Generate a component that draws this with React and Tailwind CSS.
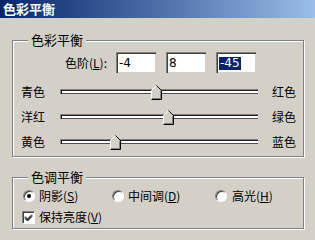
import React from 'react';

const Thumb = ({ x }) => (
  <svg
    width="11"
    height="15"
    viewBox="0 0 11 15"
    className="absolute top-[-5px]"
    style={{ left: x - 5 }}
  >
    <polygon points="5.5,0.5 10.5,5.5 10.5,14.5 0.5,14.5 0.5,5.5" fill="#d4d0c8" />
    <polyline points="0.5,14 0.5,5.5 5.5,0.5" fill="none" stroke="#ffffff" />
    <polyline points="5.5,0.5 10.5,5.5 10.5,14.5 0.5,14.5" fill="none" stroke="#000000" />
    <polyline points="9.5,6 9.5,13.5 1,13.5" fill="none" stroke="#808080" />
  </svg>
);

const Slider = ({ left, right, value }) => {
  // range -100..100 mapped onto a 198px track
  const x = Math.round(((value + 100) / 200) * 198);
  return (
    <div className="flex items-center h-[25px]">
      <span className="w-[47px] pl-[8px] leading-none">{left}</span>
      <div className="relative w-[198px] h-[5px] bg-white border-t border-l border-[#808080] border-b-white border-r-white shadow-[inset_1px_1px_0_#202020,inset_0_-1px_0_#505050]">
        <Thumb x={x} />
      </div>
      <span className="ml-[14px] leading-none">{right}</span>
    </div>
  );
};

const Field = ({ value, selected }) => (
  <div className="w-[40px] h-[21px] bg-white border-t border-l border-[#808080] border-b-white border-r-white shadow-[inset_1px_1px_0_#404040,inset_-1px_-1px_0_#d4d0c8] flex items-center pl-[2px] font-['DejaVu_Sans',sans-serif] text-[12px]">
    {selected ? (
      <span className="bg-[#0a246a] text-white leading-[13px] px-[1px]">{value}</span>
    ) : (
      <span className="leading-[13px]">{value}</span>
    )}
  </div>
);

const Radio = ({ checked }) => (
  <span className="relative w-[12px] h-[12px] rounded-full bg-white border border-[#808080] border-b-white border-r-white shadow-[inset_1px_1px_0_#404040] shrink-0">
    {checked && <span className="absolute left-[3px] top-[3px] w-[4px] h-[4px] rounded-full bg-black" />}
  </span>
);

const Group = ({ title, className, children }) => (
  <div className={`relative mx-[12px] w-[292px] border border-[#808080] shadow-[inset_1px_1px_0_#fff,1px_1px_0_#fff] ${className}`}>
    <span className="absolute left-[15px] top-[-9px] px-[3px] bg-[#d4d0c8] leading-[16px] text-[13px]">{title}</span>
    {children}
  </div>
);

export default function App() {
  return (
    <div className="w-[315px] h-[240px] overflow-hidden bg-[#d4d0c8] text-black text-[12px] font-['Noto_Sans_CJK_SC','Noto_Sans',sans-serif]">
      <div className="h-[18px] bg-gradient-to-r from-[#0a246a] to-[#9bbde8] text-white font-bold text-[13px] leading-[18px] pl-[3px]">
        色彩平衡
      </div>

      <Group title="色彩平衡" className="mt-[22px] h-[117px]">
        <div className="flex items-center mt-[11px]">
          <span className="w-[103px] text-right pr-[9px] leading-none">
            色阶(<u>L</u>):
          </span>
          <div className="flex gap-[10px]">
            <Field value="-4" />
            <Field value="8" />
            <Field value="-45" selected />
          </div>
        </div>
        <div className="mt-[6px]">
          <Slider left="青色" right="红色" value={-4} />
          <Slider left="洋红" right="绿色" value={8} />
          <Slider left="黄色" right="蓝色" value={-45} />
        </div>
      </Group>

      <Group title="色调平衡" className="mt-[20px] h-[52px]">
        <div className="flex items-center h-[16px] mt-[10px] pl-[10px]">
          <label className="w-[89px] flex items-center gap-[4px]">
            <Radio checked />
            <span className="leading-none">阴影(<u>S</u>)</span>
          </label>
          <label className="w-[103px] flex items-center gap-[4px]">
            <Radio />
            <span className="leading-none">中间调(<u>D</u>)</span>
          </label>
          <label className="flex items-center gap-[5px]">
            <Radio />
            <span className="leading-none">高光(<u>H</u>)</span>
          </label>
        </div>
        <div className="flex items-center h-[16px] mt-[5px] pl-[9px] gap-[4px]">
          <span className="w-[13px] h-[13px] bg-white border border-[#808080] border-b-white border-r-white shadow-[inset_1px_1px_0_#404040] flex items-center justify-center">
            <svg width="9" height="9" viewBox="0 0 9 9">
              <path d="M1 3.5 L3.5 6 L8 1.5 M1 4.5 L3.5 7 L8 2.5 M1 5.5 L3.5 8 L8 3.5" stroke="#000" strokeWidth="1" fill="none" />
            </svg>
          </span>
          <span className="leading-none">保持亮度(<u>V</u>)</span>
        </div>
      </Group>
    </div>
  );
}
